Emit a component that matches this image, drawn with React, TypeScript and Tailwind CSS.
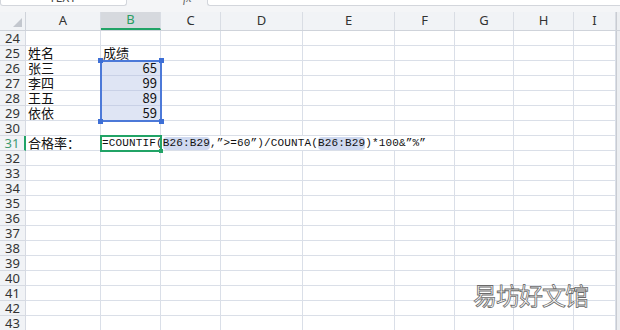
import React from 'react';

const cols = [
  { id: 'A', w: 'w-[75px]' },
  { id: 'B', w: 'w-[60px]' },
  { id: 'C', w: 'w-[60px]' },
  { id: 'D', w: 'w-[82px]' },
  { id: 'E', w: 'w-[92px]' },
  { id: 'F', w: 'w-[60px]' },
  { id: 'G', w: 'w-[59px]' },
  { id: 'H', w: 'w-[60px]' },
  { id: 'I', w: 'w-[42px]' },
];

const data: Record<number, { a?: string; b?: string; num?: boolean }> = {
  25: { a: '姓名', b: '成绩' },
  26: { a: '张三', b: '65', num: true },
  27: { a: '李四', b: '99', num: true },
  28: { a: '王五', b: '89', num: true },
  29: { a: '依依', b: '59', num: true },
};

const rows = Array.from({ length: 20 }, (_, i) => 24 + i);

const Ref = ({ children }: { children: React.ReactNode }) => (
  <span className="bg-[#cfd9f0] rounded-[4px]">{children}</span>
);

function Toolbar() {
  return (
    <div className="h-[12px] bg-[#f4f5f7] flex items-start overflow-hidden">
      <div className="w-[127px] h-[6px] bg-white border border-t-0 border-[#d3d6dc] rounded-b-[3px] relative overflow-hidden">
        <span className="absolute left-[48px] -top-[9px] text-[12px] leading-[13px] text-[#444]">TEXT</span>
      </div>
      <div className="w-[80px] h-[6px] relative overflow-hidden">
        <span className="absolute left-[56px] -top-[8px] text-[12px] leading-[13px] italic text-[#666] font-['Liberation_Serif',serif]">fx</span>
      </div>
      <div className="flex-1 h-[6px] bg-white border border-t-0 border-r-0 border-[#d3d6dc] rounded-bl-[3px]" />
    </div>
  );
}

function HeaderRow() {
  return (
    <div className="flex h-[19px] bg-[#f1f3f6] border-b border-[#cfd3da]">
      <div className="w-[26px] h-full border-r border-[#cfd3da] relative">
        <svg className="absolute left-[13px] top-[6px]" width="9" height="9" viewBox="0 0 9 9">
          <polygon points="9,0 9,9 0,9" fill="#c3c7ce" />
        </svg>
      </div>
      {cols.map((c) => {
        const active = c.id === 'B';
        return (
          <div
            key={c.id}
            className={`${c.w} h-full flex items-center justify-center border-r border-[#d9dde4] text-[13px] ${
              active ? 'bg-[#d6d9de] text-[#2a9d62] border-b-2 border-b-[#21a366]' : 'text-[#333]'
            }`}
          >
            {c.id}
          </div>
        );
      })}
      <div className="flex-1 bg-[#eceef1] border-l border-[#c9ccd2]" />
    </div>
  );
}

function Row({ n }: { n: number }) {
  const d = data[n] || {};
  const inSel = n >= 26 && n <= 29;
  const isActive = n === 31;
  return (
    <div className="flex h-[15px]">
      <div
        className={`w-[26px] h-full bg-[#f1f3f6] border-b border-[#d6dae2] flex items-center justify-center text-[13px] leading-[14px] ${
          isActive ? 'text-[#3f9a72] border-r-2 border-r-[#21a366]' : 'text-[#333] border-r border-[#cfd3da]'
        }`}
      >
        {n}
      </div>
      <div className="w-[75px] h-full border-r border-b border-[#dadfe8] pl-[2px] flex items-center text-[13px] leading-[14px] text-[#111] whitespace-nowrap font-['Noto_Sans_CJK_SC',sans-serif]">
        {isActive ? '合格率：' : d.a}
      </div>
      {isActive ? (
        <div className="w-[354px] h-full border-r border-b border-[#dadfe8] pl-[1px] flex items-center whitespace-nowrap text-[11px] leading-[13px] tracking-[0.15px] text-[#111] font-['Liberation_Mono','Noto_Sans_CJK_SC',monospace]">
          =COUNTIF(<Ref>B26:B29</Ref>,”&gt;=60”)/COUNTA(<Ref>B26:B29</Ref>)*100&amp;”%”
        </div>
      ) : (
        <div
          className={`w-[60px] h-full border-r border-b border-[#dadfe8] flex items-center text-[13px] leading-[14px] text-[#111] whitespace-nowrap font-['Noto_Sans_CJK_SC',sans-serif] ${
            d.num ? 'justify-end pr-[3px]' : 'pl-[2px]'
          } ${inSel ? 'bg-[#dfe5f4] border-b-[#c9d1e6]' : ''}`}
        >
          {d.b}
        </div>
      )}
      {cols.slice(2).map((c) =>
        isActive && ['C', 'D', 'E', 'F'].includes(c.id) ? null : (
          <div key={c.id} className={`${c.w} h-full border-r border-b border-[#dadfe8]`} />
        )
      )}
      <div className="flex-1 h-full bg-[#eceef1] border-l border-[#c9ccd2]" />
    </div>
  );
}

export default function App() {
  return (
    <div className="w-[620px] h-[330px] overflow-hidden bg-white relative font-['Noto_Sans','Noto_Sans_CJK_SC',sans-serif]">
      <Toolbar />
      <HeaderRow />
      {rows.map((n) => (
        <Row key={n} n={n} />
      ))}

      {/* selection B26:B29 */}
      <div className="absolute left-[100px] top-[60px] w-[62px] h-[62px] border-2 border-[#4c79d8] pointer-events-none">
        <span className="absolute -left-[4px] -top-[4px] w-[5px] h-[5px] bg-[#3d6fd6]" />
        <span className="absolute -right-[4px] -top-[4px] w-[5px] h-[5px] bg-[#3d6fd6]" />
        <span className="absolute -left-[4px] -bottom-[4px] w-[5px] h-[5px] bg-[#3d6fd6]" />
        <span className="absolute -right-[4px] -bottom-[4px] w-[5px] h-[5px] bg-[#3d6fd6]" />
      </div>

      {/* active cell B31 */}
      <div className="absolute left-[100px] top-[135px] w-[62px] h-[17px] border-2 border-[#21a366] pointer-events-none">
        <span className="absolute -right-[3px] -bottom-[3px] w-[4px] h-[4px] bg-[#21a366]" />
      </div>

      {/* watermark */}
      <div className="absolute left-[473px] top-[283px] text-[24px] leading-none tracking-[-1px] text-white [-webkit-text-stroke:0.8px_#6a6a6a] font-['Noto_Sans_CJK_SC',sans-serif]">
        易坊好文馆
      </div>
    </div>
  );
}
